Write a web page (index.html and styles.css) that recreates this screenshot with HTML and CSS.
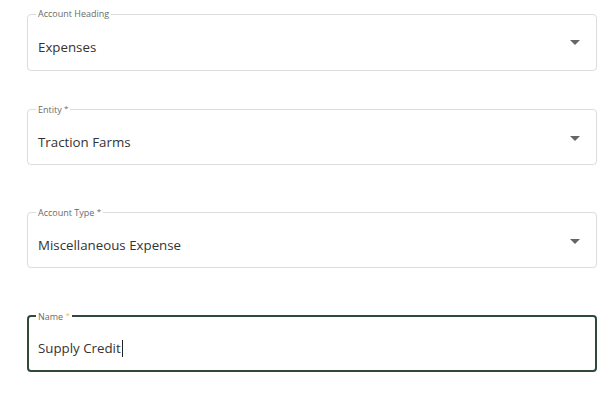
FILE: index.html
```html
<!DOCTYPE html>
<html>
<head>
<meta charset="utf-8">
<link rel="stylesheet" href="styles.css">
</head>
<body>
<div class="form">
  <div class="field f1">
    <fieldset class="box">
      <legend class="label">Account Heading</legend>
      <div class="value">Expenses</div>
      <span class="arrow"></span>
    </fieldset>
  </div>
  <div class="field f2">
    <fieldset class="box">
      <legend class="label">Entity <span class="req">*</span></legend>
      <div class="value">Traction Farms</div>
      <span class="arrow"></span>
    </fieldset>
  </div>
  <div class="field f3">
    <fieldset class="box">
      <legend class="label">Account Type <span class="req">*</span></legend>
      <div class="value">Miscellaneous Expense</div>
      <span class="arrow"></span>
    </fieldset>
  </div>
  <div class="field f4">
    <fieldset class="box focused">
      <legend class="label">Name <span class="req hot">*</span></legend>
      <div class="value">Supply Credit<span class="caret"></span></div>
    </fieldset>
  </div>
</div>
</body>
</html>
```
FILE: styles.css
```css
html, body {
  margin: 0;
  padding: 0;
  background: #fff;
}
body {
  font-family: "Open Sans", "Noto Sans", sans-serif;
  color: #333;
}
.form {
  display: flex;
  flex-direction: column;
  padding: 8px 16px 0 27px;
  width: 570px;
}
.field {
  position: relative;
}
.f2 { margin-top: 31px; }
.f3 { margin-top: 40px; }
.f4 { margin-top: 41px; }
.box {
  position: relative;
  margin: 0;
  padding: 0 10px;
  height: 63px;
  box-sizing: border-box;
  border: 1px solid #dcdcdc;
  border-radius: 4px;
  display: flex;
  align-items: center;
}
.label {
  font-size: 9px;
  color: #6a6a6a;
  padding: 0 2px;
  margin-left: -2px;
  line-height: 12px;
}
.req {
  color: #6a6a6a;
  font-size: 8px;
  vertical-align: 2px;
}
.req.hot {
  color: #efbe4c;
}
.value {
  font-size: 13.3px;
  color: #333;
  margin-top: 4px;
  display: flex;
  align-items: center;
}
.arrow {
  position: absolute;
  right: 16px;
  top: 20px;
  width: 0;
  height: 0;
  border-left: 5px solid transparent;
  border-right: 5px solid transparent;
  border-top: 5px solid #666;
}
.focused {
  border: 2px solid #2f4a3b;
  padding: 0 9px;
}
.focused .value {
  margin-top: 3px;
}
.caret {
  display: inline-block;
  width: 1px;
  height: 17px;
  background: #222;
  margin-left: 1px;
}
```
